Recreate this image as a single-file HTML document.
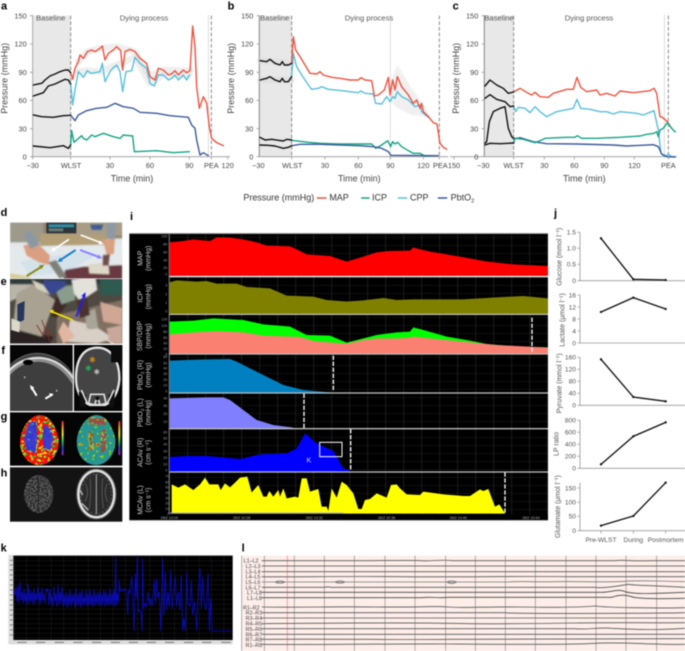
<!DOCTYPE html>
<html lang="en"><head><meta charset="utf-8"><title>Figure</title>
<style>
html,body{margin:0;padding:0;background:#fff;width:685px;height:651px;overflow:hidden}
svg{display:block;filter:blur(.4px)}
text{font-family:"Liberation Sans",sans-serif}
.tk{font-size:22px;fill:#444}
.at{font-size:27px;fill:#444}
.hd{font-size:23px;fill:#555}
.ln{fill:none;stroke-width:4.2;stroke-linejoin:round;stroke-linecap:round}
.rb{fill:none;stroke:#d8d8d8;stroke-width:20;stroke-linejoin:round;stroke-linecap:round;opacity:.4}
.bk{stroke:#111}.rd{stroke:#ee5340}.bl{stroke:#58bfdc}.nv{stroke:#3d5a9a}.gr{stroke:#14a585}
.ax{stroke:#999;stroke-width:2.5;fill:none}
.dsh{stroke:#888;stroke-width:3;stroke-dasharray:11 6}
.dot{stroke:#777;stroke-width:2;stroke-dasharray:2 4}
.pl{font-size:33px;font-weight:bold;fill:#000}
.it{font-size:11px;fill:#999}
.il{font-size:21px;fill:#ccc}
.wd{stroke:#fff;stroke-width:4;stroke-dasharray:13 5}
.jt{font-size:20px;fill:#555}
.jl{font-size:21px;fill:#555}
.jp{fill:none;stroke:#111;stroke-width:4;stroke-linejoin:round}
.ll{font-size:16px;fill:#444}
.tr{fill:none;stroke:#555;stroke-width:2.6}
.vg{stroke:#8a8a8a;stroke-width:2}
</style></head><body>
<svg width="685" height="651" viewBox="0 0 685 651" xmlns="http://www.w3.org/2000/svg">
<defs>
<filter id="soft" x="-5%" y="-5%" width="110%" height="110%"><feGaussianBlur stdDeviation="2.5"/></filter>
<filter id="nA" x="0" y="0" width="100%" height="100%" color-interpolation-filters="sRGB">
<feTurbulence type="fractalNoise" baseFrequency="0.07" numOctaves="2" seed="4"/>
<feColorMatrix type="matrix" values="1 0 0 0 0 1 0 0 0 0 1 0 0 0 0 0 0 0 0 1"/>
<feComponentTransfer>
<feFuncR type="discrete" tableValues="1 1 .95 .2 1 1 .95 .2 .95 1"/>
<feFuncG type="discrete" tableValues="0 0 .85 .75 .05 .05 .85 .75 .85 .1"/>
<feFuncB type="discrete" tableValues="0 0 .1 .2 .05 .05 .1 .2 .1 .1"/>
</feComponentTransfer></filter>
<filter id="nB" x="0" y="0" width="100%" height="100%" color-interpolation-filters="sRGB">
<feTurbulence type="fractalNoise" baseFrequency="0.08" numOctaves="2" seed="9"/>
<feColorMatrix type="matrix" values="1 0 0 0 0 1 0 0 0 0 1 0 0 0 0 0 0 0 0 1"/>
<feComponentTransfer>
<feFuncR type="discrete" tableValues="1 1 .7 .15 .16 .16 .16 .15 .7 1"/>
<feFuncG type="discrete" tableValues="0 .1 .8 .65 .58 .58 .58 .65 .8 .1"/>
<feFuncB type="discrete" tableValues="0 .1 .1 .4 .6 .6 .6 .4 .1 .1"/>
</feComponentTransfer></filter>
<filter id="nD" x="0" y="0" width="100%" height="100%" color-interpolation-filters="sRGB">
<feTurbulence type="fractalNoise" baseFrequency="0.08" numOctaves="2" seed="6"/>
<feColorMatrix type="matrix" values="1 0 0 0 0 1 0 0 0 0 1 0 0 0 0 0 0 0 0 1"/>
<feComponentTransfer>
<feFuncR type="discrete" tableValues=".9 .3 .2 .2 .2 .25 .3 .2 .9 .9"/>
<feFuncG type="discrete" tableValues=".7 .2 .2 .2 .25 .25 .2 .7 .8 .8"/>
<feFuncB type="discrete" tableValues=".1 .8 .8 .85 .8 .8 .8 .6 .1 .1"/>
</feComponentTransfer></filter>
<filter id="nC" x="0" y="0" width="100%" height="100%" color-interpolation-filters="sRGB">
<feTurbulence type="fractalNoise" baseFrequency="0.2" numOctaves="2" seed="3"/>
<feColorMatrix type="matrix" values="1 0 0 0 0 1 0 0 0 0 1 0 0 0 0 0 0 0 0 1"/>
<feComponentTransfer>
<feFuncR type="linear" slope="1.3" intercept="-.2"/>
<feFuncG type="linear" slope="1.3" intercept="-.2"/>
<feFuncB type="linear" slope="1.3" intercept="-.2"/>
</feComponentTransfer></filter>
<linearGradient id="rb" x1="0" y1="0" x2="0" y2="1">
<stop offset="0" stop-color="#e02020"/><stop offset=".2" stop-color="#f0a020"/><stop offset=".4" stop-color="#e8e830"/><stop offset=".6" stop-color="#30c040"/><stop offset=".8" stop-color="#2040c0"/><stop offset="1" stop-color="#a020c0"/>
</linearGradient>
<pattern id="gp" x="10" y="0" width="54" height="24" patternUnits="userSpaceOnUse">
<path d="M1 0V24" stroke="#555" stroke-width="2" stroke-dasharray="3 3"/>
<path d="M0 1H54" stroke="#444" stroke-width="1.6" stroke-dasharray="3 4"/>
</pattern>
<pattern id="gk" x="42" y="62" width="37" height="14.5" patternUnits="userSpaceOnUse">
<path d="M0 0V15" stroke="#3a3a3a" stroke-width="1.5"/>
<path d="M0 0H37" stroke="#3a3a3a" stroke-width="1.5"/>
</pattern>
<clipPath id="cf1"><rect x="30" y="420" width="188" height="198"/></clipPath>
<clipPath id="cf2"><rect x="222" y="420" width="145" height="198"/></clipPath>
<clipPath id="cd"><rect x="30" y="52" width="337" height="168"/></clipPath>
<clipPath id="ce"><rect x="30" y="222" width="337" height="194"/></clipPath>
<clipPath id="cg1"><path d="M120 630C150 632 165 660 176 700 180 740 155 780 118 780 80 780 60 745 60 710 62 670 90 630 120 630Z"/></clipPath>
<clipPath id="cg2"><path d="M290 630C320 632 335 660 346 700 350 740 325 780 288 780 250 780 230 745 230 710 232 670 260 630 290 630Z"/></clipPath>
<clipPath id="cgl"><path d="M88 652 108 648 112 700 106 745 80 735 72 700ZM132 658 152 672 160 705 152 735 132 732 128 695Z"/></clipPath>
<clipPath id="cgr"><path d="M262 685 280 670 284 735 266 735ZM300 680 318 670 322 730 304 745ZM270 635 310 640 318 660 262 660Z"/></clipPath>
<clipPath id="ch1"><ellipse cx="116" cy="867" rx="44" ry="57"/></clipPath>
</defs>

<!-- panel a -->
<g transform="scale(.33333)">
<text class="pl" x="3" y="28">a</text>
<rect x="98" y="47" width="114" height="423" fill="#e8e8e8"/>
<path class="ax" d="M90 47H98V470M90 132H98M90 217H98M90 301H98M90 386H98M90 470H690M212 470V478M330 470V478M450 470V478M568 470V478M634 470V478M683 470V478M98 470V478"/>
<line class="dsh" x1="212" y1="47" x2="212" y2="470"/><line class="dot" x1="625" y1="47" x2="625" y2="470"/><line class="dsh" x1="634" y1="47" x2="634" y2="470"/>
<g class="tk" text-anchor="end"><text x="80" y="55">150</text><text x="80" y="140">120</text><text x="80" y="225">90</text><text x="80" y="309">60</text><text x="80" y="394">30</text><text x="80" y="478">0</text></g>
<g class="tk" text-anchor="middle"><text x="98" y="504">−30</text><text x="213" y="504">WLST</text><text x="330" y="504">30</text><text x="450" y="504">60</text><text x="568" y="504">90</text><text x="634" y="504">PEA</text><text x="683" y="504">120</text></g>
<text class="hd" text-anchor="middle" x="152" y="61">Baseline</text><text class="hd" text-anchor="middle" x="432" y="61">Dying process</text>
<text class="at" text-anchor="middle" x="396" y="544">Time (min)</text>
<text class="at" text-anchor="middle" transform="translate(22 235) rotate(-90)">Pressure (mmHg)</text>
<path class="rb" d="M235 185 262 155 300 145 350 140 405 155 450 230 490 210 570 212"/>
<path class="rb" d="M235 215 262 212 300 215 350 195 405 172 450 250 490 225 568 225"/>
<path class="ln bl" d="M212 250 218 315 225 270 235 215 242 222 250 232 262 212 273 220 285 218 300 215 307 190 315 245 330 215 340 203 350 195 360 215 368 275 378 215 395 212 405 172 420 190 440 205 450 250 463 258 475 225 490 225 505 240 515 235 525 225 535 240 550 225 560 240 568 225"/>
<path class="ln rd" d="M212 218 218 238 225 205 235 185 240 165 250 175 262 155 275 150 285 155 300 145 307 138 315 180 325 160 340 150 350 140 362 152 368 210 375 155 390 148 405 155 420 175 440 190 450 230 465 240 475 205 490 210 505 225 515 222 525 212 535 225 550 210 560 218 570 212 578 78 585 140 590 260 598 325 610 290 620 310 628 380 635 415 650 428 670 437"/>
<path class="ln nv" d="M212 346 225 362 235 345 260 332 290 325 320 322 345 310 370 320 400 325 420 337 470 340 510 347 565 352 575 375 585 385 590 420 600 465 610 458 625 467"/>
<path class="ln gr" d="M212 435 215 392 222 427 245 407 250 415 260 420 275 405 285 410 310 400 340 410 360 415 370 405 398 408 403 455 470 452 520 458 568 455"/>
<path class="ln bk" d="M100 255 110 253 125 250 135 240 150 228 165 222 180 215 195 210 205 210 212 218"/>
<path class="ln bk" d="M100 288 115 283 130 278 145 258 165 252 180 245 195 238 205 240 212 252"/>
<path class="ln bk" d="M100 345 125 350 160 352 190 347 212 346"/>
<path class="ln bk" d="M100 438 150 443 190 437 205 445 212 435"/>
</g>

<!-- panel b -->
<g transform="translate(225 0) scale(.33333)">
<text class="pl" x="8" y="28">b</text>
<rect x="103" y="47" width="97" height="423" fill="#e8e8e8"/><rect x="101" y="47" width="4" height="423" fill="#aaa"/>
<path class="ax" d="M95 47H103V470M95 132H103M95 217H103M95 301H103M95 386H103M95 470H670M200 470V478M300 470V478M400 470V478M496 470V478M595 470V478M643 470V478"/>
<line class="dsh" x1="200" y1="47" x2="200" y2="470"/><line class="dot" x1="496" y1="47" x2="496" y2="470"/><line class="dsh" x1="643" y1="47" x2="643" y2="470"/>
<g class="tk" text-anchor="end"><text x="85" y="55">150</text><text x="85" y="140">120</text><text x="85" y="225">90</text><text x="85" y="309">60</text><text x="85" y="394">30</text><text x="85" y="478">0</text></g>
<g class="tk" text-anchor="middle"><text x="100" y="504">−30</text><text x="202" y="504">WLST</text><text x="300" y="504">30</text><text x="400" y="504">60</text><text x="496" y="504">90</text><text x="595" y="504">120</text><text x="646" y="504">PEA</text></g>
<text class="hd" text-anchor="middle" x="149" y="61">Baseline</text><text class="hd" text-anchor="middle" x="432" y="61">Dying process</text>
<text class="at" text-anchor="middle" x="403" y="544">Time (min)</text>
<text class="at" text-anchor="middle" transform="translate(27 235) rotate(-90)">Pressure (mmHg)</text>
<path d="M495 250 517 195 560 265 600 320 620 355 600 350 560 345 510 320 495 300Z" fill="#ddd" opacity=".45" filter="url(#soft)"/>
<path class="rb" d="M105 182 200 190M105 240 200 240"/>
<path class="ln bl" d="M200 230 205 160 215 200 230 225 250 255 260 268 280 265 290 260 310 268 350 272 400 278 408 273 420 280 445 282 452 310 470 312 485 290 495 305 503 290 510 295 517 275 530 290 550 300 570 320 585 315 590 335 610 352"/>
<path class="ln rd" d="M200 190 205 110 212 150 225 170 240 195 255 220 275 222 285 215 295 225 320 232 345 235 375 240 400 240 408 233 420 240 440 242 448 288 460 285 478 270 490 232 495 285 503 240 510 270 517 230 530 260 550 285 565 310 575 300 585 325 590 310 595 335 610 350 625 368 636 372 645 430 655 442 665 448"/>
<path class="ln gr" d="M200 421 250 427 285 430 340 432 400 432 440 432 452 445 470 435 488 422 497 440 503 425 510 432 518 427 530 440 550 452 565 460 585 460 600 468 620 467"/>
<path class="ln nv" d="M200 437 225 433 285 433 400 437 445 440 470 445 490 455 498 466 640 467"/>
<path class="ln bk" d="M105 182 125 185 135 178 150 190 165 195 172 185 178 195 190 195 200 190"/>
<path class="ln bk" d="M105 240 125 235 135 230 150 240 165 245 172 235 178 245 190 245 200 230"/>
<path class="ln bk" d="M105 412 120 420 140 418 160 421 175 423 185 418 200 420"/>
<path class="ln bk" d="M105 435 130 436 150 438 175 445 190 442 200 437"/>
</g>

<!-- panel c -->
<g transform="translate(450 0) scale(.33333)">
<text class="pl" x="8" y="28">c</text>
<rect x="103" y="47" width="88" height="423" fill="#e8e8e8"/><rect x="101" y="47" width="4" height="423" fill="#aaa"/>
<path class="ax" d="M95 47H103V470M95 132H103M95 217H103M95 301H103M95 386H103M0 470H680M12 470V478M191 470V478M283 470V478M373 470V478M463 470V478M553 470V478M655 470V478"/>
<line class="dsh" x1="191" y1="47" x2="191" y2="470"/><line class="dot" x1="643" y1="47" x2="643" y2="470"/><line class="dsh" x1="655" y1="47" x2="655" y2="470"/>
<g class="tk" text-anchor="end"><text x="85" y="55">150</text><text x="85" y="140">120</text><text x="85" y="225">90</text><text x="85" y="309">60</text><text x="85" y="394">30</text><text x="85" y="478">0</text></g>
<g class="tk" text-anchor="middle"><text x="12" y="504">150</text><text x="100" y="504">−30</text><text x="191" y="504">WLST</text><text x="283" y="504">30</text><text x="373" y="504">60</text><text x="463" y="504">90</text><text x="553" y="504">120</text><text x="655" y="504">PEA</text></g>
<text class="hd" text-anchor="middle" x="147" y="61">Baseline</text><text class="hd" text-anchor="middle" x="417" y="61">Dying process</text>
<text class="at" text-anchor="middle" x="403" y="544">Time (min)</text>
<text class="at" text-anchor="middle" transform="translate(27 235) rotate(-90)">Pressure (mmHg)</text>
<path class="ln bl" d="M191 318 197 335 205 322 225 325 240 338 255 320 270 335 290 350 320 335 370 325 381 298 392 325 420 328 450 335 470 335 490 342 510 335 560 340 580 345 612 332 625 390 633 460 645 470 655 462 665 470 678 470"/>
<path class="ln rd" d="M191 276 210 265 235 280 245 285 255 277 270 290 295 292 310 280 350 268 370 268 381 232 392 262 410 275 440 270 450 285 470 280 495 288 510 273 550 278 600 272 612 265 620 280 630 350 637 352 652 365 665 385"/>
<path class="ln nv" d="M191 417 210 413 250 425 290 431 380 432 490 435 530 438 610 434 625 440 635 462 650 470 675 471"/>
<path class="ln gr" d="M191 430 195 415 220 418 255 428 275 420 285 415 350 412 375 412 382 407 395 415 440 415 510 412 570 408 590 403 612 400 620 395 625 410 630 390 640 385 652 368 665 385 676 396"/>
<path class="ln bk" d="M105 258 120 240 140 255 160 265 175 280 191 276"/>
<path class="ln bk" d="M105 295 120 284 140 298 165 305 180 320 191 318"/>
<path class="ln bk" d="M105 430 110 425 118 365 130 335 150 325 165 320 175 385 185 410 191 415"/>
<path class="ln bk" d="M105 435 120 430 150 431 191 429"/>
</g>

<!-- legend -->
<g transform="translate(225 0) scale(.33333)">
<text class="at" x="55" y="602" style="fill:#333">Pressure (mmHg)</text>
<path class="ln rd" d="M277 594H303"/><text class="at" x="313" y="602" style="fill:#333">MAP</text>
<path class="ln gr" d="M410 594H432"/><text class="at" x="441" y="602" style="fill:#333">ICP</text>
<path class="ln bl" d="M520 594H545"/><text class="at" x="555" y="602" style="fill:#333">CPP</text>
<path class="ln nv" d="M640 594H665"/><text class="at" x="677" y="602" style="fill:#333">PbtO<tspan font-size="17" dy="5">2</tspan></text>
</g>

<!-- panels d-h -->
<g transform="translate(0 205) scale(.33333)">
<text class="pl" x="2" y="33">d</text><text class="pl" x="2" y="240">e</text><text class="pl" x="4" y="447">f</text><text class="pl" x="2" y="645">g</text><text class="pl" x="2" y="815">h</text>
<!-- d -->
<g clip-path="url(#cd)">
<rect x="30" y="52" width="337" height="168" fill="#e2e6e8"/>
<g filter="url(#soft)">
<rect x="30" y="52" width="110" height="60" fill="#9d9a8c"/>
<rect x="130" y="52" width="237" height="48" fill="#8f8468"/>
<rect x="120" y="85" width="200" height="38" fill="#b39f74"/>
<rect x="225" y="52" width="142" height="40" fill="#a89c84"/>
<path d="M30 125 367 118V220H30Z" fill="#e4e9ec"/>
<path d="M60 170 230 140 300 145 200 200 90 215Z" fill="#d4e2ea"/>
<path d="M195 195 250 185 367 180V225H190Z" fill="#6a3840"/>
<path d="M265 178 325 172 328 208 268 205Z" fill="#ded8c8"/>
<path d="M270 58H310L305 75H275Z" fill="#3b5f95"/>
<path d="M70 122 110 112 150 152 146 180 118 172 80 152Z" fill="#d99f80"/>
<path d="M308 105 345 100 342 147 320 150Z" fill="#d8a180"/>
<path d="M68 85 92 78 120 118 92 132Z" fill="#8b98a2"/>
<path d="M318 55 350 52 346 102 322 102Z" fill="#8f99a3"/>
<path d="M145 172 168 165 200 215 178 220Z" fill="#7f8178"/>
<path d="M308 150 330 148 326 182 308 182Z" fill="#6f4e4a"/>
<path d="M30 205 90 215V222H30Z" fill="#d8cc90"/>
</g>
<rect x="139" y="53" width="90" height="32" fill="#2e343c"/><rect x="146" y="58" width="76" height="9" fill="#2f8fa5"/><rect x="146" y="70" width="44" height="9" fill="#667a78"/>
<path d="M207 103 158 136" stroke="#fff" stroke-width="5"/><path d="M152 140l16-3-7-11z" fill="#fff"/>
<path d="M242 90 305 114" stroke="#fff" stroke-width="5"/><path d="M311 117l-16 1 5-12z" fill="#fff"/>
<path d="M227 135 178 167" stroke="#1f80c4" stroke-width="6"/><path d="M172 171l16-2-7-12z" fill="#1f80c4"/>
<path d="M240 135 302 158" stroke="#8c84ff" stroke-width="6"/><path d="M307 160l-16 1 5-13z" fill="#8c84ff"/>
<path d="M128 183 80 213" stroke="#8a8a1c" stroke-width="6"/><path d="M133 179l-16 2 7 12z" fill="#8a8a1c"/>
</g>
<!-- e -->
<g clip-path="url(#ce)">
<rect x="30" y="222" width="337" height="194" fill="#4e4a42"/>
<g filter="url(#soft)">
<path d="M30 222H367V238H30Z" fill="#2e3a3c"/>
<rect x="300" y="222" width="67" height="48" fill="#2d5a50"/>
<path d="M30 238H100L50 280 30 290Z" fill="#b9b6a8"/>
<path d="M170 330 367 285V416H170Z" fill="#7f6f62"/>
<path d="M210 345 280 360 340 400 290 416 200 410Z" fill="#d8cfc6"/>
<path d="M190 350 225 395 190 416 175 380Z" fill="#e2b7a2"/>
<path d="M255 325 285 310 295 370 260 375Z" fill="#a8a698"/>
<path d="M300 290 367 310V360L310 350Z" fill="#cfa794"/>
<path d="M320 370 367 360V416H330Z" fill="#c9a89a"/>
<path d="M30 375 160 395 150 416H30Z" fill="#2a2420"/>
<path d="M135 290 190 270 200 300 170 340 150 330Z" fill="#3d2a26"/>
<path d="M175 245 225 240 225 285 185 298 170 265Z" fill="#8a9c8c"/>
<path d="M215 225 285 212 292 255 240 290 222 265Z" fill="#e2e1da"/>
<path d="M230 285 260 275 270 330 240 340Z" fill="#4a3030"/>
<path d="M50 265 100 238 165 285 125 395 38 370Z" fill="#a9a192"/>
<path d="M132 225 198 228 195 245 155 270 128 250Z" fill="#37478f"/>
<path d="M95 225 130 240 150 270 110 250Z" fill="#d6d2c0"/>
</g>
<path d="M52 298 74 288 72 345 52 355Z" fill="#27365c"/>
<path d="M34 340 60 350 58 382 34 375Z" fill="#dbd8ca"/>
<path d="M110 360 135 400M125 345 150 410M140 370 160 395" stroke="#8c2a24" stroke-width="2.5" fill="none"/>
<path d="M215 345 340 416" stroke="#d8d0c0" stroke-width="4"/>
<path d="M255 265 229 335" stroke="#1c1cff" stroke-width="5"/><path d="M256 262l-12 11 12 5z" fill="#1c1cff"/>
<path d="M218 345 156 320" stroke="#f2e800" stroke-width="5"/><path d="M147 317l15-3-5 12z" fill="#f2e800"/>
</g>
<!-- f -->
<rect x="30" y="420" width="188" height="198" fill="#060606"/><rect x="222" y="420" width="145" height="198" fill="#060606"/>
<g clip-path="url(#cf1)">
<path d="M20 500C70 420 170 420 225 530V620H20Z" fill="#3e3e3e"/>
<path d="M22 490C70 428 170 425 222 515" fill="none" stroke="#666" stroke-width="3"/>
<path d="M20 510C70 445 170 440 225 535" fill="none" stroke="#8e8e8e" stroke-width="16"/>
<path d="M20 506C70 443 170 437 225 528" fill="none" stroke="#e6e6e6" stroke-width="5"/>
<ellipse cx="84" cy="472" rx="15" ry="8" fill="#000"/>
<path d="M94 546 110 572" stroke="#fff" stroke-width="6"/><path d="M90 540l13 8-10 7z" fill="#fff"/>
<path d="M158 568 136 581" stroke="#fff" stroke-width="6"/><path d="M160 566l-13-1 5 10z" fill="#fff"/>
<rect x="72" y="515" width="4" height="4" fill="#ddd"/><rect x="168" y="555" width="4" height="4" fill="#ddd"/>
</g>
<g clip-path="url(#cf2)">
<path d="M228 520C228 455 255 428 292 428 335 428 360 470 358 525 355 560 340 590 315 600H270C245 590 228 560 228 520Z" fill="#444" stroke="#e2e2e2" stroke-width="7"/>
<rect x="333" y="420" width="34" height="52" fill="#0a0a0a"/>
<path d="M236 560 258 570 255 610 240 605ZM345 560 325 570 328 610 342 605Z" fill="#111"/>
<path d="M272 568H312L318 595 300 600 296 585H288L284 600 266 595Z" fill="none" stroke="#ddd" stroke-width="5"/>
<path d="M244 555 262 595M342 555 322 595" stroke="#ddd" stroke-width="5"/>
<circle cx="292" cy="580" r="6" fill="#111"/>
<text x="277" y="472" text-anchor="middle" font-size="24" fill="#c08a20">✱</text>
<text x="265" y="498" text-anchor="middle" font-size="24" fill="#22aa55">✱</text>
<text x="290" y="508" text-anchor="middle" font-size="22" fill="#bbb">✱</text>
</g>
<!-- g -->
<rect x="30" y="622" width="337" height="160" fill="#050505"/>
<g clip-path="url(#cg1)"><rect x="55" y="625" width="125" height="158" filter="url(#nA)"/></g>
<g clip-path="url(#cgl)"><rect x="55" y="625" width="125" height="158" filter="url(#nD)"/></g>
<g clip-path="url(#cg2)"><rect x="225" y="625" width="125" height="158" filter="url(#nB)"/></g>
<g clip-path="url(#cgr)"><rect x="225" y="625" width="125" height="158" filter="url(#nA)" opacity=".55"/></g>
<rect x="185" y="648" width="6" height="102" fill="url(#rb)"/><rect x="355" y="648" width="6" height="102" fill="url(#rb)"/>
<!-- h -->
<rect x="30" y="787" width="337" height="163" fill="#131313"/>
<g clip-path="url(#ch1)"><rect x="70" y="808" width="92" height="118" filter="url(#nC)" opacity=".5"/><rect x="113" y="815" width="3" height="105" fill="#222"/></g>
<ellipse cx="289" cy="867" rx="54" ry="70" fill="#2a2a2a" stroke="#ddd" stroke-width="8"/>
<ellipse cx="289" cy="867" rx="60" ry="76" fill="none" stroke="#555" stroke-width="2"/>
<ellipse cx="289" cy="867" rx="46" ry="60" fill="none" stroke="#4a4a4a" stroke-width="4" stroke-dasharray="6 6"/>
<path d="M289 808V928" stroke="#aaa" stroke-width="3"/>
<path d="M255 835Q270 860 255 890M323 835Q308 860 323 890M270 820Q275 860 268 910M308 820Q303 860 310 910" fill="none" stroke="#5c5c5c" stroke-width="2.5"/>
<path d="M240 855 248 870M245 895 265 915" stroke="#aaa" stroke-width="5"/>
</g>

<!-- panel i -->
<text class="pl" x="130" y="220" style="font-size:11px">i</text>
<g transform="translate(130 205) scale(.33333)">
<rect x="-2" y="85" width="1256" height="860" fill="#000"/>
<rect x="118" y="88" width="1136" height="840" fill="url(#gp)"/>
<path fill="#f00" d="M118 112 160 108 190 103 240 108 260 97 300 98 340 103 380 112 410 122 480 124 500 133 530 148 600 153 650 170 700 155 740 142 780 138 840 137 850 127 870 133 900 140 990 155 1070 170 1150 178 1254 183V211H118Z"/>
<path fill="#808000" d="M118 232 140 226 200 230 230 228 260 236 320 236 350 246 420 250 470 272 550 275 590 285 650 290 700 286 760 279 800 285 850 283 1000 283 1100 277 1180 273 1254 280V327H118Z"/>
<path fill="#0f0" d="M118 350 190 347 250 340 340 345 400 358 480 365 530 390 600 392 650 413 700 400 740 390 800 382 840 380 850 367 880 375 950 395 1010 405 1070 417 1150 424 1254 427V446H118Z"/>
<path fill="#fa8072" d="M118 388 190 382 260 378 340 382 400 392 510 396 550 408 600 412 650 416 700 405 740 400 800 400 840 398 850 395 900 400 1000 410 1100 420 1254 428V446H118Z"/>
<path fill="#0080c0" d="M118 467 200 464 300 462 320 470 360 490 400 510 460 540 520 555 600 562V563H118Z"/>
<path fill="#8080ff" d="M118 580 230 577 280 577 300 585 340 615 380 645 430 660 490 668V670H118Z"/>
<path fill="#00f" d="M118 756 170 753 230 753 280 757 330 762 390 748 470 745 500 730 525 685 560 715 610 738 640 790 662 798V800H118Z"/>
<path fill="#ff0" d="M125 838 145 848 165 838 190 855 210 838 225 818 238 838 265 838 272 855 285 835 300 847 320 828 330 818 352 815 365 862 385 840 400 875 410 875 418 858 430 875 445 855 450 875 460 850 470 880 495 875 505 878 515 820 530 820 540 860 565 852 575 905 590 905 595 918 605 850 620 878 635 830 650 840 670 865 685 912 695 912 705 885 720 882 740 865 770 878 783 840 800 838 810 850 830 868 870 870 880 860 940 868 1000 873 1020 873 1050 853 1060 858 1075 852 1095 905 1108 898 1125 925V926H125Z"/>
<rect x="118" y="923" width="522" height="3" fill="#9999ff"/>
<g fill="#bbb">
<rect x="116" y="212" width="1138" height="5" fill="#ddd"/><rect x="116" y="326" width="1138" height="4"/><rect x="116" y="445" width="1138" height="4"/><rect x="116" y="562" width="1138" height="4"/><rect x="116" y="669" width="1138" height="4"/><rect x="116" y="799" width="1138" height="4"/>
<rect x="-2" y="84" width="1256" height="3" fill="#999"/><rect x="116" y="86" width="3" height="840" fill="#777"/>
</g>
<rect x="-2" y="945" width="1256" height="2" fill="#999"/>
<line class="wd" x1="610" y1="452" x2="610" y2="560"/>
<line class="wd" x1="522" y1="566" x2="522" y2="670"/>
<line class="wd" x1="662" y1="672" x2="662" y2="798"/>
<line class="wd" x1="1125" y1="802" x2="1125" y2="925"/>
<line class="wd" x1="1206" y1="338" x2="1206" y2="440"/>
<rect x="569" y="712" width="67" height="43" fill="none" stroke="#fff" stroke-width="3"/>
<text x="537" y="772" text-anchor="middle" font-size="22" fill="#ccf">K</text>
<g class="it" text-anchor="end">
<text x="112" y="97">100</text><text x="112" y="121">80</text><text x="112" y="145">60</text><text x="112" y="169">40</text><text x="112" y="192">20</text><text x="112" y="212">0</text>
<text x="112" y="245">3</text><text x="112" y="271">2</text><text x="112" y="297">1</text><text x="112" y="323">0</text>
<text x="112" y="347">120</text><text x="112" y="366">100</text><text x="112" y="384">80</text><text x="112" y="402">60</text><text x="112" y="418">40</text><text x="112" y="435">20</text><text x="112" y="451">0</text>
<text x="112" y="459">60</text><text x="112" y="478">50</text><text x="112" y="494">40</text><text x="112" y="510">30</text><text x="112" y="528">20</text><text x="112" y="544">10</text><text x="112" y="563">0</text>
<text x="112" y="584">40</text><text x="112" y="606">30</text><text x="112" y="630">20</text><text x="112" y="654">10</text>
<text x="112" y="685">60</text><text x="112" y="703">50</text><text x="112" y="722">40</text><text x="112" y="743">30</text><text x="112" y="762">20</text><text x="112" y="781">10</text><text x="112" y="799">0</text>
<text x="118" y="817">70</text><text x="118" y="835">60</text><text x="118" y="851">50</text><text x="118" y="867">40</text><text x="118" y="883">30</text><text x="118" y="899">20</text><text x="118" y="915">10</text><text x="118" y="930">0</text>
</g>
<g class="il" text-anchor="middle">
<text transform="translate(38 160) rotate(-90)">MAP</text><text transform="translate(62 160) rotate(-90)">(mmHg)</text>
<text transform="translate(38 275) rotate(-90)">ICP</text><text transform="translate(62 275) rotate(-90)">(mmHg)</text>
<text transform="translate(36 393) rotate(-90)">SBP/DBP</text><text transform="translate(62 393) rotate(-90)">(mmHg)</text>
<text transform="translate(38 510) rotate(-90)">PbtO<tspan font-size="14" dy="4">2</tspan><tspan dy="-4"> (R)</tspan></text><text transform="translate(62 510) rotate(-90)">(mmHg)</text>
<text transform="translate(38 623) rotate(-90)">PbtO<tspan font-size="14" dy="4">2</tspan><tspan dy="-4"> (L)</tspan></text><text transform="translate(62 623) rotate(-90)">(mmHg)</text>
<text transform="translate(38 742) rotate(-90)">ACAv (R)</text><text transform="translate(62 742) rotate(-90)">(cm s<tspan font-size="14" dy="-7">−1</tspan><tspan dy="7">)</tspan></text>
<text transform="translate(38 885) rotate(-90)">MCAv (L)</text><text transform="translate(62 885) rotate(-90)">(cm s<tspan font-size="14" dy="-7">−1</tspan><tspan dy="7">)</tspan></text>
</g>
<g font-size="11" fill="#bbb" text-anchor="middle">
<text x="118" y="942">26/2 10:24</text><text x="335" y="942">26/2 10:28</text><text x="553" y="942">26/2 10:32</text><text x="770" y="942">26/2 10:36</text><text x="985" y="942">26/2 10:40</text><text x="1203" y="942">26/2 10:44</text>
</g>
</g>

<!-- panel j -->
<g transform="translate(400 205) scale(.33333)">
<text class="pl" x="462" y="34">j</text>
<g class="ax" stroke-width="2.5">
<path d="M540 82V227H855M533 82H540M533 130H540M533 178H540M533 227H540"/>
<path d="M540 270V414H855M533 270H540M533 306H540M533 342H540M533 378H540M533 414H540"/>
<path d="M540 457V601H855M533 457H540M533 493H540M533 529H540M533 565H540M533 601H540"/>
<path d="M540 646V790H855M533 646H540M533 682H540M533 718H540M533 754H540M533 790H540"/>
<path d="M540 833V977H855M533 849H540M533 892H540M533 934H540M533 977H540M603 977V985M700 977V985M797 977V985"/>
</g>
<g class="jt" text-anchor="end">
<text x="528" y="89">1.5</text><text x="528" y="137">1.0</text><text x="528" y="185">0.5</text><text x="528" y="234">0</text>
<text x="528" y="277">16</text><text x="528" y="313">12</text><text x="528" y="349">8</text><text x="528" y="385">4</text><text x="528" y="421">0</text>
<text x="528" y="464">160</text><text x="528" y="500">120</text><text x="528" y="536">80</text><text x="528" y="572">40</text><text x="528" y="608">0</text>
<text x="528" y="653">800</text><text x="528" y="689">600</text><text x="528" y="725">400</text><text x="528" y="761">200</text><text x="528" y="797">0</text>
<text x="528" y="856">150</text><text x="528" y="899">100</text><text x="528" y="941">50</text><text x="528" y="984">0</text>
</g>
<g class="jl" text-anchor="middle">
<text transform="translate(484 155) rotate(-90)">Glucose (mmol l<tspan font-size="14" dy="-7">−1</tspan><tspan dy="7">)</tspan></text>
<text transform="translate(494 345) rotate(-90)">Lactate (µmol l<tspan font-size="14" dy="-7">−1</tspan><tspan dy="7">)</tspan></text>
<text transform="translate(484 535) rotate(-90)">Pyruvate (mmol l<tspan font-size="14" dy="-7">−1</tspan><tspan dy="7">)</tspan></text>
<text transform="translate(476 717) rotate(-90)">LP ratio</text>
<text transform="translate(480 905) rotate(-90)">Glutamate (µmol l<tspan font-size="14" dy="-7">−1</tspan><tspan dy="7">)</tspan></text>
</g>
<path class="jp" d="M603 100 700 223 797 225"/>
<path class="jp" d="M603 321 700 278 797 312"/>
<path class="jp" d="M603 463 700 576 797 589"/>
<path class="jp" d="M603 778 700 694 797 652"/>
<path class="jp" d="M603 962 700 933 797 833"/>
<g fill="#111"><circle cx="603" cy="100" r="3.5"/><circle cx="700" cy="223" r="3.5"/><circle cx="797" cy="225" r="3.5"/><circle cx="603" cy="321" r="3.5"/><circle cx="700" cy="278" r="3.5"/><circle cx="797" cy="312" r="3.5"/><circle cx="603" cy="463" r="3.5"/><circle cx="700" cy="576" r="3.5"/><circle cx="797" cy="589" r="3.5"/><circle cx="603" cy="778" r="3.5"/><circle cx="700" cy="694" r="3.5"/><circle cx="797" cy="652" r="3.5"/><circle cx="603" cy="962" r="3.5"/><circle cx="700" cy="933" r="3.5"/><circle cx="797" cy="833" r="3.5"/></g>
<g class="jt" text-anchor="middle"><text x="603" y="1011">Pre-WLST</text><text x="700" y="1011">During</text><text x="797" y="1011">Postmortem</text></g>
</g>

<!-- panel k -->
<g transform="translate(0 535) scale(.33333)">
<text class="pl" x="2" y="50">k</text>
<rect x="25" y="60" width="673" height="268" fill="#dcdcdc"/>
<rect x="40" y="62" width="658" height="253" fill="#000"/>
<rect x="40" y="62" width="658" height="253" fill="url(#gk)"/>
<path d="M30 76h8M30 90h8M30 105h8M30 120h8M30 135h8M30 150h8M30 165h8M30 180h8M30 195h8M30 210h8M30 225h8M30 240h8M30 255h8M30 270h8M30 285h8M30 300h8M52 322h28M108 322h28M164 322h28M220 322h28M276 322h28M332 322h28M386 322h28M440 322h28M495 322h28M552 322h28M606 322h28M664 322h28" stroke="#777" stroke-width="3"/>
<path fill="none" stroke="#0b0bc8" stroke-width="2.4" stroke-linejoin="bevel" d="M42 165 45 180 48 155 51 200 54 150 57 205 60 140 63 195 66 170 69 205 72 160 75 200 78 175 81 210 84 145 87 205 90 165 93 200 96 170 99 208 102 160 105 205 108 175 111 195 114 155 117 208 120 170 123 205 126 158 129 195 132 180 135 205 138 160 141 170 144 160 147 210 150 165 153 205 156 185 159 215 162 155 165 200 168 175 171 215 174 150 177 210 180 170 183 205 186 155 189 215 192 180 195 210 198 170 201 218 204 178 207 210 210 165 213 215 216 180 219 205 222 175 225 218 228 160 231 210 234 180 237 212 240 170 243 218 246 165 249 212 252 185 255 208 258 165 261 215 264 175 267 210 270 165 273 212 276 180 279 215 282 162 285 212 288 178 291 208 294 170 297 212 300 168 303 215 306 178 309 208 312 165 315 215 318 170 321 210 324 180 327 212 330 160 333 210 336 175 339 212 342 165 345 215 347 62 349 210 352 175 355 205 358 135 360 170 365 162 370 170 375 160 380 170 383 240 386 165 390 175 395 125 398 170 402 288 406 115 409 190 412 62 415 230 419 225 423 235 426 288 428 70 431 220 435 205 440 215 444 170 448 210 452 190 456 215 460 180 463 135 466 205 470 130 473 190 478 170 482 288 488 70 492 240 496 110 500 225 504 170 508 215 512 105 516 220 520 180 526 125 530 215 535 170 540 225 544 120 548 288 552 250 556 288 560 108 564 205 570 215 574 135 578 240 584 200 590 288 594 180 600 100 604 220 608 125 612 200 618 225 624 115 628 288 632 190 636 288 640 288 695 288"/>
</g>

<!-- panel l -->
<g transform="translate(235 535) scale(.33333)">
<text class="pl" x="20" y="50">l</text>
<rect x="20" y="62" width="1330" height="286" fill="#fdeee9"/>
<path d="M20 62V348" stroke="#888" stroke-width="2"/>
<g class="vg">
<path d="M88 62V348M178 62V348M268 62V348M358 62V348M450 62V348M540 62V348M632 62V348M721 62V348M811 62V348M901 62V348M993 62V348M1083 62V348M1173 62V348M1265 62V348"/>
</g>
<path d="M157 62V348" stroke="#f5a0a0" stroke-width="3"/>
<g class="tr">
<path d="M80 77H360C400 78 500 75 560 77 590 79 620 73 650 77H1140C1165 73 1170 79 1250 77H1350"/>
<path d="M80 93H1350" stroke="#444"/>
<path d="M80 110H1350"/>
<path d="M80 125C180 127 300 123 500 125S800 123 1000 125H1350"/>
<path d="M80 141H120C130 136 140 136 150 141 142 146 128 146 120 141H300C310 136 320 136 330 141 320 146 310 146 300 141H635C645 136 655 136 665 141 655 147 645 147 635 141H820C860 137 900 142 960 140S1100 143 1170 139 1240 138 1350 140" stroke="#777"/>
<path d="M80 157H270C280 153 290 159 300 157H1080C1100 160 1140 155 1180 148 1200 152 1230 150 1350 157"/>
<path d="M80 172H1100C1130 172 1150 160 1170 170 1200 178 1250 176 1350 172" stroke="#444"/>
<path d="M80 188H560C590 185 610 190 640 187H1130C1150 180 1170 178 1190 185S1270 192 1350 190" stroke="#444"/>
<path d="M80 216C200 218 300 214 420 216S600 212 640 216 760 214 860 216C950 218 1040 216 1080 213 1120 218 1250 220 1350 218"/>
<path d="M80 233H810C830 236 1200 236 1350 233"/>
<path d="M80 249H1350"/>
<path d="M80 266C300 264 500 262 640 265S900 266 1020 264 1200 264 1350 263"/>
<path d="M80 281H1020C1050 285 1100 276 1130 280 1200 284 1280 285 1350 280"/>
<path d="M80 298H1350"/>
<path d="M80 313C300 311 500 315 640 313S1000 314 1350 311"/>
<path d="M80 328C200 330 500 326 640 327S1000 330 1080 325 1250 330 1350 328"/>
</g>
<g class="ll">
<text x="26" y="83">L1–L2</text><text x="32" y="99">L2–L3</text><text x="32" y="116">L3–L4</text><text x="32" y="131">L4–L5</text><text x="32" y="147">L5–L6</text><text x="32" y="163">L6–L7</text><text x="36" y="179">L7–L8</text><text x="36" y="195">L1–L8</text>
<text x="24" y="223">R1–R2</text><text x="32" y="239">R2–R3</text><text x="32" y="255">R3–R4</text><text x="32" y="272">R4–R5</text><text x="32" y="288">R5–R6</text><text x="32" y="304">R6–R7</text><text x="32" y="320">R7–R8</text><text x="32" y="336">R1–R8</text>
</g>
</g>
</svg>
</body></html>
